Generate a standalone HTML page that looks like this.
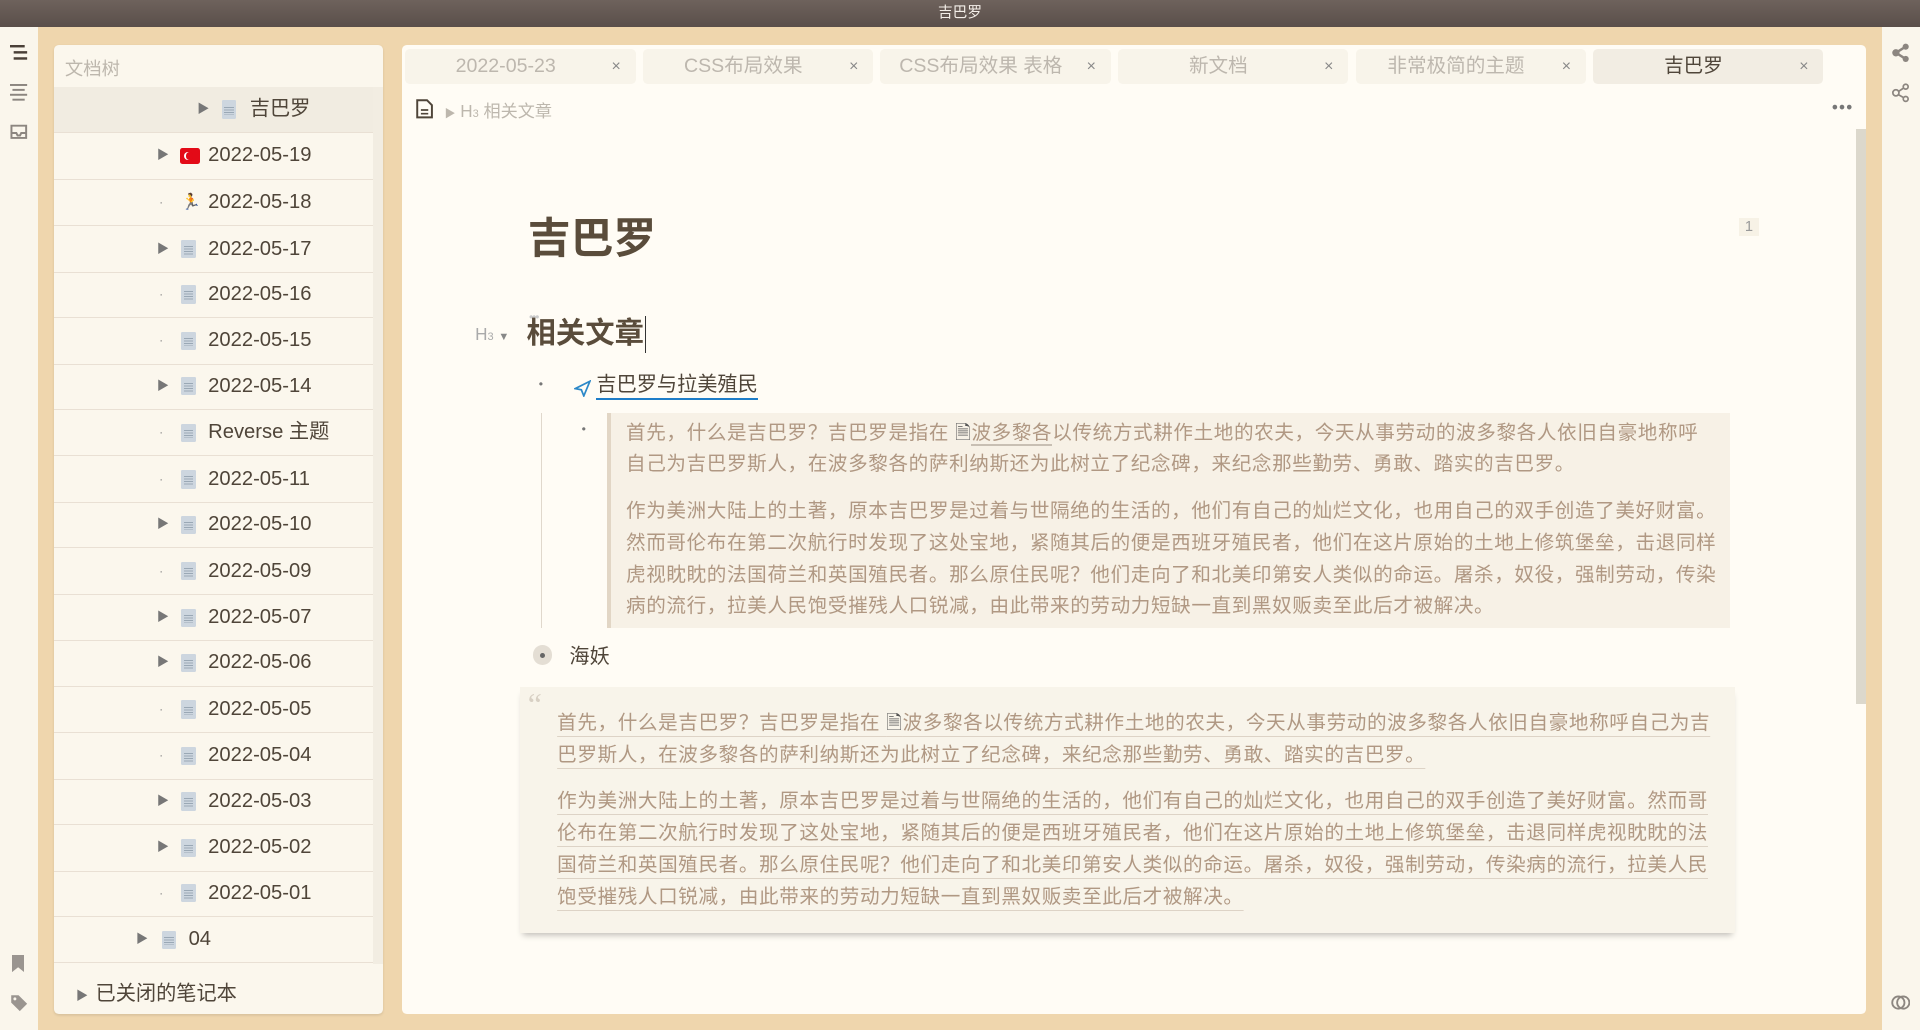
<!DOCTYPE html>
<html><head><meta charset="utf-8"><style>
html{zoom:1.22449}
body{margin:0;width:1568px;height:841px;overflow:hidden;background:#efd6ad;font-family:"Liberation Sans","Noto Sans CJK SC",sans-serif;position:relative;color:#4f4539}
.abs{position:absolute}
#title{left:0;top:0;width:1568px;height:22px;background:linear-gradient(#6e625c,#5a4f4a);color:#f3eee8;font-size:12px;text-align:center;line-height:22px}
#lbar{left:0;top:22px;width:31px;height:819px;background:#faf6ec}
#rbar{left:1537px;top:22px;width:31px;height:819px;background:#faf6ec}
#tree{left:44px;top:37px;width:269px;height:791px;background:#fbf7ed;border-radius:4px;box-shadow:0 1px 2px rgba(0,0,0,.1)}
.row{position:absolute;left:0;width:261px;height:37px;border-bottom:1px solid #e9e0d4;font-size:16.5px;line-height:37px;color:#4f4539}
.row .t{position:absolute}
.tri{position:absolute;font-size:10px;color:#777}
.doc{position:absolute;width:12px;height:15px;background:#cdd6df;top:11px;border-radius:1px}
.doc:after{content:"";position:absolute;left:2px;right:2px;top:5px;height:7px;background:repeating-linear-gradient(#9aa8b5 0 1px,transparent 1px 2px)}
.dot{position:absolute;color:#888;font-size:10px}
#ed{left:328px;top:37px;width:1196px;height:791px;background:#fffcf5;border-radius:4px}
.tab{position:absolute;top:3px;width:188px;height:29px;background:#f8f4ea;border-radius:4px;font-size:16px;color:#bdb7ae;line-height:29px;text-align:center;padding-right:24px;box-sizing:border-box}
.tab .x{position:absolute;right:12px;top:0;font-size:13px;color:#888}
.q{color:#b09883;font-size:16px;letter-spacing:0.5px;line-height:26px}
</style></head><body>
<div id="title" class="abs">吉巴罗</div>
<div id="lbar" class="abs">
 <svg class="abs" style="left:8px;top:15px" width="15" height="13"><rect x="0" y="0" width="12" height="2" fill="#4a4038"/><rect x="3" y="5" width="11" height="2" fill="#4a4038"/><rect x="3" y="10" width="11" height="2" fill="#4a4038"/></svg>
 <svg class="abs" style="left:8px;top:47px" width="15" height="14"><g fill="#8c8680"><rect x="0" y="0" width="14" height="1.6"/><rect x="2" y="4" width="10" height="1.6"/><rect x="0" y="8" width="14" height="1.6"/><rect x="2" y="12" width="10" height="1.6"/></g></svg>
 <svg class="abs" style="left:7px;top:78px" width="16" height="16"><path d="M2 3h12v10H2z M2 9h4l1 2h2l1-2h4" fill="none" stroke="#8c8680" stroke-width="1.6"/></svg>
 <svg class="abs" style="left:10px;top:758px" width="10" height="14"><path d="M0 0h10v14l-5-4-5 4z" fill="#9a9590"/></svg>
 <svg class="abs" style="left:8px;top:790px" width="15" height="15"><path d="M1 1h6l7 7-6 6-7-7z" fill="#9a9590"/><circle cx="4" cy="4" r="1.2" fill="#faf6ec"/></svg>
</div>
<div id="rbar" class="abs">
 <svg class="abs" style="left:7px;top:13px" width="16" height="16"><circle cx="12" cy="3" r="2.5" fill="#8c8680"/><circle cx="4" cy="8" r="3" fill="#8c8680"/><circle cx="12" cy="13" r="2.5" fill="#8c8680"/><path d="M12 3L4 8l8 5" stroke="#8c8680" stroke-width="2" fill="none"/></svg>
 <svg class="abs" style="left:7px;top:46px" width="16" height="16"><circle cx="12" cy="3" r="2" fill="none" stroke="#8c8680" stroke-width="1.4"/><circle cx="4" cy="8" r="2.5" fill="none" stroke="#8c8680" stroke-width="1.4"/><circle cx="12" cy="13" r="2" fill="none" stroke="#8c8680" stroke-width="1.4"/><path d="M10.5 4L6 7M6 9.5l4.5 2.5" stroke="#8c8680" stroke-width="1.4"/></svg>
 <svg class="abs" style="left:7px;top:790px" width="16" height="14"><circle cx="6" cy="7" r="5" fill="none" stroke="#8c8680" stroke-width="1.5"/><circle cx="10" cy="7" r="5" fill="none" stroke="#8c8680" stroke-width="1.5"/></svg>
</div>
<div id="tree" class="abs">
 <div class="abs" style="left:9px;top:8px;font-size:15px;color:#bdb7ad">文档树</div>
 <div class="abs" style="left:261px;top:34px;width:8px;height:716px;background:#f2ede2"></div>
 <div class="row" style="top:34px;background:#f1ece1"><span class="tri" style="left:117px">▶</span><span class="doc" style="left:137px"></span><span class="t" style="left:160px">吉巴罗</span></div>
 <div class="row" style="top:72px"><span class="tri" style="left:84px">▶</span><span class="abs" style="left:103px;top:12px;width:16px;height:13px;background:#e30a17;border-radius:2px"><span style="position:absolute;left:3px;top:3px;width:7px;height:7px;border-radius:50%;background:#fff"></span><span style="position:absolute;left:5px;top:3.5px;width:6px;height:6px;border-radius:50%;background:#e30a17"></span></span><span class="t" style="left:126px">2022-05-19</span></div>
 <div class="row" style="top:110px"><span class="dot" style="left:86px">·</span><span class="abs" style="left:104px;font-size:13px">🏃</span><span class="t" style="left:126px">2022-05-18</span></div>
 <div class="row" style="top:148px"><span class="tri" style="left:84px">▶</span><span class="doc" style="left:104px"></span><span class="t" style="left:126px">2022-05-17</span></div>
 <div class="row" style="top:185px"><span class="dot" style="left:86px">·</span><span class="doc" style="left:104px"></span><span class="t" style="left:126px">2022-05-16</span></div>
 <div class="row" style="top:223px"><span class="dot" style="left:86px">·</span><span class="doc" style="left:104px"></span><span class="t" style="left:126px">2022-05-15</span></div>
 <div class="row" style="top:260px"><span class="tri" style="left:84px">▶</span><span class="doc" style="left:104px"></span><span class="t" style="left:126px">2022-05-14</span></div>
 <div class="row" style="top:298px"><span class="dot" style="left:86px">·</span><span class="doc" style="left:104px"></span><span class="t" style="left:126px">Reverse 主题</span></div>
 <div class="row" style="top:336px"><span class="dot" style="left:86px">·</span><span class="doc" style="left:104px"></span><span class="t" style="left:126px">2022-05-11</span></div>
 <div class="row" style="top:373px"><span class="tri" style="left:84px">▶</span><span class="doc" style="left:104px"></span><span class="t" style="left:126px">2022-05-10</span></div>
 <div class="row" style="top:411px"><span class="dot" style="left:86px">·</span><span class="doc" style="left:104px"></span><span class="t" style="left:126px">2022-05-09</span></div>
 <div class="row" style="top:449px"><span class="tri" style="left:84px">▶</span><span class="doc" style="left:104px"></span><span class="t" style="left:126px">2022-05-07</span></div>
 <div class="row" style="top:486px"><span class="tri" style="left:84px">▶</span><span class="doc" style="left:104px"></span><span class="t" style="left:126px">2022-05-06</span></div>
 <div class="row" style="top:524px"><span class="dot" style="left:86px">·</span><span class="doc" style="left:104px"></span><span class="t" style="left:126px">2022-05-05</span></div>
 <div class="row" style="top:562px"><span class="dot" style="left:86px">·</span><span class="doc" style="left:104px"></span><span class="t" style="left:126px">2022-05-04</span></div>
 <div class="row" style="top:599px"><span class="tri" style="left:84px">▶</span><span class="doc" style="left:104px"></span><span class="t" style="left:126px">2022-05-03</span></div>
 <div class="row" style="top:637px"><span class="tri" style="left:84px">▶</span><span class="doc" style="left:104px"></span><span class="t" style="left:126px">2022-05-02</span></div>
 <div class="row" style="top:674px"><span class="dot" style="left:86px">·</span><span class="doc" style="left:104px"></span><span class="t" style="left:126px">2022-05-01</span></div>
 <div class="row" style="top:712px"><span class="tri" style="left:67px">▶</span><span class="doc" style="left:88px"></span><span class="t" style="left:110px">04</span></div>
 <div class="abs" style="left:18px;top:761px;font-size:16.5px;color:#4f4539"><span style="font-size:10px;color:#777;margin-right:6px">▶</span>已关闭的笔记本</div>
</div>
<div id="ed" class="abs">
 <div class="tab" style="left:3px">2022-05-23<span class="x">×</span></div>
 <div class="tab" style="left:197px">CSS布局效果<span class="x">×</span></div>
 <div class="tab" style="left:391px">CSS布局效果 表格<span class="x">×</span></div>
 <div class="tab" style="left:585px">新文档<span class="x">×</span></div>
 <div class="tab" style="left:779px">非常极简的主题<span class="x">×</span></div>
 <div class="tab" style="left:973px;background:#f2ede3;color:#4f4539">吉巴罗<span class="x">×</span></div>
 <svg class="abs" style="left:12px;top:44px" width="14" height="16"><path d="M1 1h8l4 4v10H1z" fill="none" stroke="#4f4539" stroke-width="1.6"/><path d="M4 9h6M4 12h6" stroke="#4f4539" stroke-width="1.4"/></svg>
 <div class="abs" style="left:35px;top:42px;font-size:14px;color:#bdb7ad"><span style="font-size:9px">▶</span> H<span style="font-size:9px">3</span> 相关文章</div>
 <div class="abs" style="left:1168px;top:42px;font-size:14px;color:#777;letter-spacing:1px">•••</div>
 <div class="abs" style="left:1188px;top:68px;width:8px;height:470px;background:#dcd8cc"></div>
 <div class="abs" style="left:103px;top:130px;font-size:35px;font-weight:bold;color:#5a4c3b">吉巴罗</div>
 <div class="abs" style="left:1092px;top:141px;font-size:12px;color:#999;background:#f7f2e6;padding:1px 5px">1</div>
 <div class="abs" style="left:60px;top:228px;font-size:14px;color:#aaa">H<span style="font-size:9px">3</span> <span style="font-size:9px;color:#888">▼</span></div>
 <div class="abs" style="left:104px;top:216px;font-size:10px;color:#ccc;letter-spacing:-1px">•••</div>
 <div class="abs" style="left:102px;top:221px;font-size:24px;font-weight:bold;color:#5a4c3b;border-right:1.5px solid #333;padding-right:1px;line-height:30px">相关文章</div>
 <div class="abs" style="left:112px;top:271px;font-size:10px;color:#777">•</div>
 <svg class="abs" style="left:141px;top:273px" width="14" height="14"><path d="M13 1L1 7l5 1 2 5z" fill="none" stroke="#2c88c8" stroke-width="1.4"/></svg>
 <div class="abs" style="left:159px;top:268px;font-size:16.5px;color:#4f4539;border-bottom:2px solid #1e7dc8;line-height:20px">吉巴罗与拉美殖民</div>
 <div class="abs" style="left:114px;top:300px;width:1px;height:176px;background:#e0d8cc"></div>
 <div class="abs" style="left:147px;top:308px;font-size:10px;color:#777">•</div>
 <div class="abs q" style="left:168px;top:300px;width:917px;height:176px;background:#f7f1e6;border-left:4px solid #e2d6c5;padding:0 10px 0 12px;box-sizing:border-box">
  <div style="padding-top:4px">首先，什么是吉巴罗？吉巴罗是指在 <span style="color:#555">🗎</span><span style="border-bottom:2px solid #c8bfb3">波多黎各</span>以传统方式耕作土地的农夫，今天从事劳动的波多黎各人依旧自豪地称呼自己为吉巴罗斯人，在波多黎各的萨利纳斯还为此树立了纪念碑，来纪念那些勤劳、勇敢、踏实的吉巴罗。</div>
  <div style="margin-top:12px">作为美洲大陆上的土著，原本吉巴罗是过着与世隔绝的生活的，他们有自己的灿烂文化，也用自己的双手创造了美好财富。然而哥伦布在第二次航行时发现了这处宝地，紧随其后的便是西班牙殖民者，他们在这片原始的土地上修筑堡垒，击退同样虎视眈眈的法国荷兰和英国殖民者。那么原住民呢？他们走向了和北美印第安人类似的命运。屠杀，奴役，强制劳动，传染病的流行，拉美人民饱受摧残人口锐减，由此带来的劳动力短缺一直到黑奴贩卖至此后才被解决。</div>
 </div>
 <div class="abs" style="left:107px;top:490px;width:16px;height:16px;border-radius:50%;background:#e4ded4"><div style="position:absolute;left:6px;top:6px;width:4px;height:4px;border-radius:50%;background:#666"></div></div>
 <div class="abs" style="left:137px;top:486px;font-size:16.5px;color:#4f4539">海妖</div>
 <div class="abs q" style="left:97px;top:524px;width:992px;height:201px;background:#f8f4ea;box-shadow:0 4px 5px -2px rgba(0,0,0,.25);padding:17px 20px 0 30px;box-sizing:border-box;text-decoration:underline;text-decoration-color:#ddd3c6;text-underline-offset:6px">
  <div class="abs" style="left:6px;top:2px;font-size:26px;color:#d8d0c4;text-decoration:none;font-family:'Liberation Serif',serif">“</div>
  <div>首先，什么是吉巴罗？吉巴罗是指在 <span style="color:#555">🗎</span>波多黎各以传统方式耕作土地的农夫，今天从事劳动的波多黎各人依旧自豪地称呼自己为吉巴罗斯人，在波多黎各的萨利纳斯还为此树立了纪念碑，来纪念那些勤劳、勇敢、踏实的吉巴罗。</div>
  <div style="margin-top:12px">作为美洲大陆上的土著，原本吉巴罗是过着与世隔绝的生活的，他们有自己的灿烂文化，也用自己的双手创造了美好财富。然而哥伦布在第二次航行时发现了这处宝地，紧随其后的便是西班牙殖民者，他们在这片原始的土地上修筑堡垒，击退同样虎视眈眈的法国荷兰和英国殖民者。那么原住民呢？他们走向了和北美印第安人类似的命运。屠杀，奴役，强制劳动，传染病的流行，拉美人民饱受摧残人口锐减，由此带来的劳动力短缺一直到黑奴贩卖至此后才被解决。</div>
 </div>
</div>
</body></html>
